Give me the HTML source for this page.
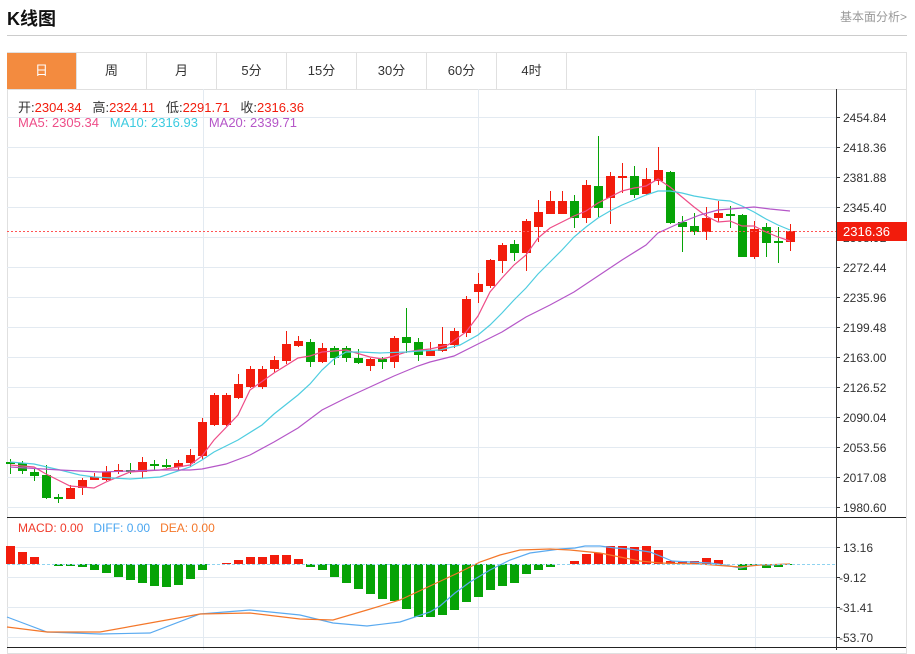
<!DOCTYPE html>
<html><head><meta charset="utf-8">
<style>
html,body{margin:0;padding:0;background:#fff;width:915px;height:650px;overflow:hidden;font-family:"Liberation Sans","Noto Sans CJK SC",sans-serif;}
.title{position:absolute;left:7px;top:5px;font-size:18px;font-weight:bold;color:#111;}
.more{position:absolute;right:8px;top:8px;font-size:12px;color:#999;}
.hr{position:absolute;left:7px;top:35px;width:900px;height:1px;background:#ccc;}
.frame{position:absolute;left:7px;top:52px;width:898px;height:600px;border:1px solid #e0e0e0;}
.tabs{position:absolute;left:7px;top:52px;height:36px;border-top:1px solid #e0e0e0;border-bottom:1px solid #e0e0e0;width:900px;}
.tab{position:absolute;top:0;width:70px;height:36px;line-height:36px;text-align:center;font-size:13px;color:#333;border-right:1px solid #e0e0e0;box-sizing:border-box;}
.info{position:absolute;left:18px;font-size:13px;white-space:nowrap;}
svg{position:absolute;left:0;top:0;}
.ax{font-size:12px;fill:#333;font-family:"Liberation Sans",sans-serif;}
</style></head><body>
<div class="title">K线图</div>
<div class="more">基本面分析&gt;</div>
<div class="hr"></div>
<div class="frame"></div>
<div class="tabs">
<div class="tab" style="left:0;background:#f38b3f;color:#fff;">日</div>
<div class="tab" style="left:70px">周</div>
<div class="tab" style="left:140px">月</div>
<div class="tab" style="left:210px">5分</div>
<div class="tab" style="left:280px">15分</div>
<div class="tab" style="left:350px">30分</div>
<div class="tab" style="left:420px">60分</div>
<div class="tab" style="left:490px">4时</div>
</div>
<svg id="s" width="915" height="650">
<g stroke="#e3eaf1" stroke-width="1">
<line x1="7" x2="836" y1="117.5" y2="117.5"/><line x1="7" x2="836" y1="147.5" y2="147.5"/><line x1="7" x2="836" y1="177.5" y2="177.5"/><line x1="7" x2="836" y1="207.5" y2="207.5"/><line x1="7" x2="836" y1="237.5" y2="237.5"/><line x1="7" x2="836" y1="267.5" y2="267.5"/><line x1="7" x2="836" y1="297.5" y2="297.5"/><line x1="7" x2="836" y1="327.5" y2="327.5"/><line x1="7" x2="836" y1="357.5" y2="357.5"/><line x1="7" x2="836" y1="387.5" y2="387.5"/><line x1="7" x2="836" y1="417.5" y2="417.5"/><line x1="7" x2="836" y1="447.5" y2="447.5"/><line x1="7" x2="836" y1="477.5" y2="477.5"/><line x1="7" x2="836" y1="507.5" y2="507.5"/>
<line x1="7" x2="836" y1="547.5" y2="547.5"/><line x1="7" x2="836" y1="577.5" y2="577.5"/><line x1="7" x2="836" y1="607.5" y2="607.5"/><line x1="7" x2="836" y1="637.5" y2="637.5"/>
<line x1="203.5" x2="203.5" y1="89" y2="650"/><line x1="478.5" x2="478.5" y1="89" y2="650"/><line x1="755.5" x2="755.5" y1="89" y2="650"/>
</g>
<g id="c"></g>
<line x1="7" x2="836" y1="231.5" y2="231.5" stroke="#f55" stroke-dasharray="2,2"/>
<line x1="7" x2="836" y1="564.5" y2="564.5" stroke="#8fd3f0" stroke-dasharray="3,2"/>
<line x1="7" x2="906" y1="517.5" y2="517.5" stroke="#222"/>
<line x1="7" x2="906" y1="647.5" y2="647.5" stroke="#222"/>
<line x1="836.5" x2="836.5" y1="89" y2="650" stroke="#333"/>
<g stroke="#333">
<line x1="836" x2="840" y1="117.5" y2="117.5"/><line x1="836" x2="840" y1="147.5" y2="147.5"/><line x1="836" x2="840" y1="177.5" y2="177.5"/><line x1="836" x2="840" y1="207.5" y2="207.5"/><line x1="836" x2="840" y1="237.5" y2="237.5"/><line x1="836" x2="840" y1="267.5" y2="267.5"/><line x1="836" x2="840" y1="297.5" y2="297.5"/><line x1="836" x2="840" y1="327.5" y2="327.5"/><line x1="836" x2="840" y1="357.5" y2="357.5"/><line x1="836" x2="840" y1="387.5" y2="387.5"/><line x1="836" x2="840" y1="417.5" y2="417.5"/><line x1="836" x2="840" y1="447.5" y2="447.5"/><line x1="836" x2="840" y1="477.5" y2="477.5"/><line x1="836" x2="840" y1="507.5" y2="507.5"/>
<line x1="836" x2="840" y1="547.5" y2="547.5"/><line x1="836" x2="840" y1="577.5" y2="577.5"/><line x1="836" x2="840" y1="607.5" y2="607.5"/><line x1="836" x2="840" y1="637.5" y2="637.5"/>
</g>
<g class="ax">
<text x="843" y="122">2454.84</text><text x="843" y="152">2418.36</text><text x="843" y="182">2381.88</text><text x="843" y="212">2345.40</text><text x="843" y="242">2308.92</text><text x="843" y="272">2272.44</text><text x="843" y="302">2235.96</text><text x="843" y="332">2199.48</text><text x="843" y="362">2163.00</text><text x="843" y="392">2126.52</text><text x="843" y="422">2090.04</text><text x="843" y="452">2053.56</text><text x="843" y="482">2017.08</text><text x="843" y="512">1980.60</text>
<text x="843" y="552">13.16</text><text x="839" y="582">-9.12</text><text x="839" y="612">-31.41</text><text x="839" y="642">-53.70</text>
</g>
<rect x="837" y="222" width="70" height="19" fill="#f21c0c"/>
<text x="843" y="236" font-size="13" fill="#fff" font-family="Liberation Sans,sans-serif">2316.36</text>
</svg>
<div class="info" style="top:97px;color:#333;">开:<span style="color:#f21c0c">2304.34</span>&nbsp;&nbsp; 高:<span style="color:#f21c0c">2324.11</span>&nbsp;&nbsp; 低:<span style="color:#f21c0c">2291.71</span>&nbsp;&nbsp; 收:<span style="color:#f21c0c">2316.36</span></div>
<div class="info" style="top:115px;"><span style="color:#ee4d88">MA5: 2305.34</span>&nbsp;&nbsp; <span style="color:#3ccbe0">MA10: 2316.93</span>&nbsp;&nbsp; <span style="color:#b557c8">MA20: 2339.71</span></div>
<div class="info" style="top:521px;font-size:12px;"><span style="color:#f03a2a">MACD: 0.00</span>&nbsp;&nbsp; <span style="color:#4aa6f0">DIFF: 0.00</span>&nbsp;&nbsp; <span style="color:#f4772a">DEA: 0.00</span></div>
<script>
var R="#f21c0c",G="#06a306";
var k=[[G,462,464,459,474],[G,463,471,461,474],[G,472,476,468,481],[G,475,498,465,499],[G,497,499,494,503],[R,488,499,485,499],[R,480,488,478,495],[R,477,480,473,480],[R,472,480,466,481],[R,470,472,464,474],[G,470,472,463,474],[R,462,472,457,478],[G,464,466,460,470],[G,465,467,459,468],[R,463,467,460,470],[R,455,463,449,467],[R,422,456,418,459],[R,395,425,393,426],[R,395,425,393,426],[R,384,398,374,399],[R,369,387,366,388],[R,369,387,366,389],[R,360,369,356,372],[R,344,361,331,364],[R,341,346,336,347],[G,342,362,339,367],[R,348,362,343,363],[G,348,358,346,365],[G,348,358,346,362],[G,358,363,349,364],[R,359,366,358,371],[G,359,362,357,369],[R,338,362,336,368],[G,337,343,308,353],[G,342,355,338,361],[R,350,356,342,356],[R,344,351,327,352],[R,331,345,328,348],[R,299,333,296,337],[R,284,292,273,303],[R,260,286,259,288],[R,245,261,243,273],[G,244,253,240,261],[R,221,253,219,271],[R,212,227,200,242],[R,201,214,191,214],[R,201,214,191,214],[G,201,218,195,228],[R,185,218,180,223],[G,186,208,136,217],[R,176,198,172,224],[R,176,178,163,193],[G,176,195,166,198],[R,179,194,168,195],[R,170,181,147,185],[G,172,223,171,224],[G,222,227,216,252],[G,226,232,213,235],[R,218,232,207,240],[R,213,218,201,222],[G,214,216,206,228],[G,215,257,214,257],[R,229,257,221,259],[G,227,243,223,257],[G,241,243,227,263],[R,231,242,224,251]];
var h=[546,552,557,564,566,566,567,570,573,577,580,583,586,587,585,579,570,564,563,560,557,557,555,555,559,567,570,577,583,589,594,599,601,609,617,617,615,610,602,597,590,586,583,574,570,567,564,561,554,553,546,546,547,546,550,561,561,561,558,560,564,570,565,568,567,565];
var s="";
for(var i=0;i<k.length;i++){var x=10+12*i,c=k[i];
s+='<line x1="'+(x+.5)+'" x2="'+(x+.5)+'" y1="'+c[3]+'" y2="'+c[4]+'" stroke="'+c[0]+'"/>';
s+='<rect x="'+(x-4)+'" y="'+c[1]+'" width="9" height="'+Math.max(1,c[2]-c[1])+'" fill="'+c[0]+'"/>';
var v=h[i];if(v!=564){var t=Math.min(v,564),b=Math.max(v,564);s+='<rect x="'+(x-4)+'" y="'+t+'" width="9" height="'+(b-t)+'" fill="'+(v<564?R:G)+'"/>';}}
function pl(p,col){return '<polyline fill="none" stroke="'+col+'" stroke-width="1.2" points="'+p+'"/>';}
s+=pl("10,465 34,467 46,474 70,486 94,488 106,482 130,472 160,470 190,465 202,456 214,440 238,415 250,390 274,373 298,358 310,356 322,352 346,350 370,357 382,359 394,356 406,352 420,350 430,349 448,345 466,332 478,316 490,292 502,278 514,265 526,255 538,238 550,228 562,222 574,216 586,211 598,203 610,197 622,191 634,188 646,186 658,179 670,187 682,197 694,207 706,216 718,222 730,221 742,226 754,226 766,232 778,237 790,241","#ee4d88");
s+=pl("10,462 34,464 60,470 80,475 94,477 130,479 160,477 190,467 202,460 214,452 238,440 262,425 274,414 298,395 310,384 322,370 334,359 346,352 360,352 380,353 406,352 420,351 440,350 460,345 478,335 490,325 502,313 514,300 526,288 538,274 550,262 562,250 574,237 586,227 598,218 610,211 622,205 634,200 646,195 658,191 670,191 682,193 694,196 706,198 718,200 730,201 742,206 754,212 766,219 778,225 790,230","#4fcde0");
s+=pl("10,467 60,470 100,472 130,471 160,470 190,470 202,469 226,464 250,455 274,442 298,428 322,410 346,398 370,387 394,376 418,366 430,362 454,356 478,344 502,332 526,317 550,305 574,292 598,276 622,260 646,245 658,233 682,222 700,215 718,210 742,208 754,207 770,209 790,211","#b557c8");
s+=pl("7,617 47,632 100,634 150,633 200,614 250,610 300,615 333,623 367,626 400,622 430,612 440,606 455,593 470,582 490,570 510,560 530,553 560,549 575,548 585,546 600,546 615,548 630,549 650,552 665,558 672,561 690,562 710,563 725,565 740,568 755,565 770,565 790,564","#5aaaf0");
s+=pl("7,627 47,632 100,632 150,623 200,614 250,613 300,619 333,620 367,610 400,600 430,586 460,572 480,562 500,555 520,550 550,549 570,550 600,553 620,557 640,561 660,563 700,564 740,567 760,565 790,564","#f4772a");
document.getElementById("c").innerHTML=s;
</script>
</body></html>
